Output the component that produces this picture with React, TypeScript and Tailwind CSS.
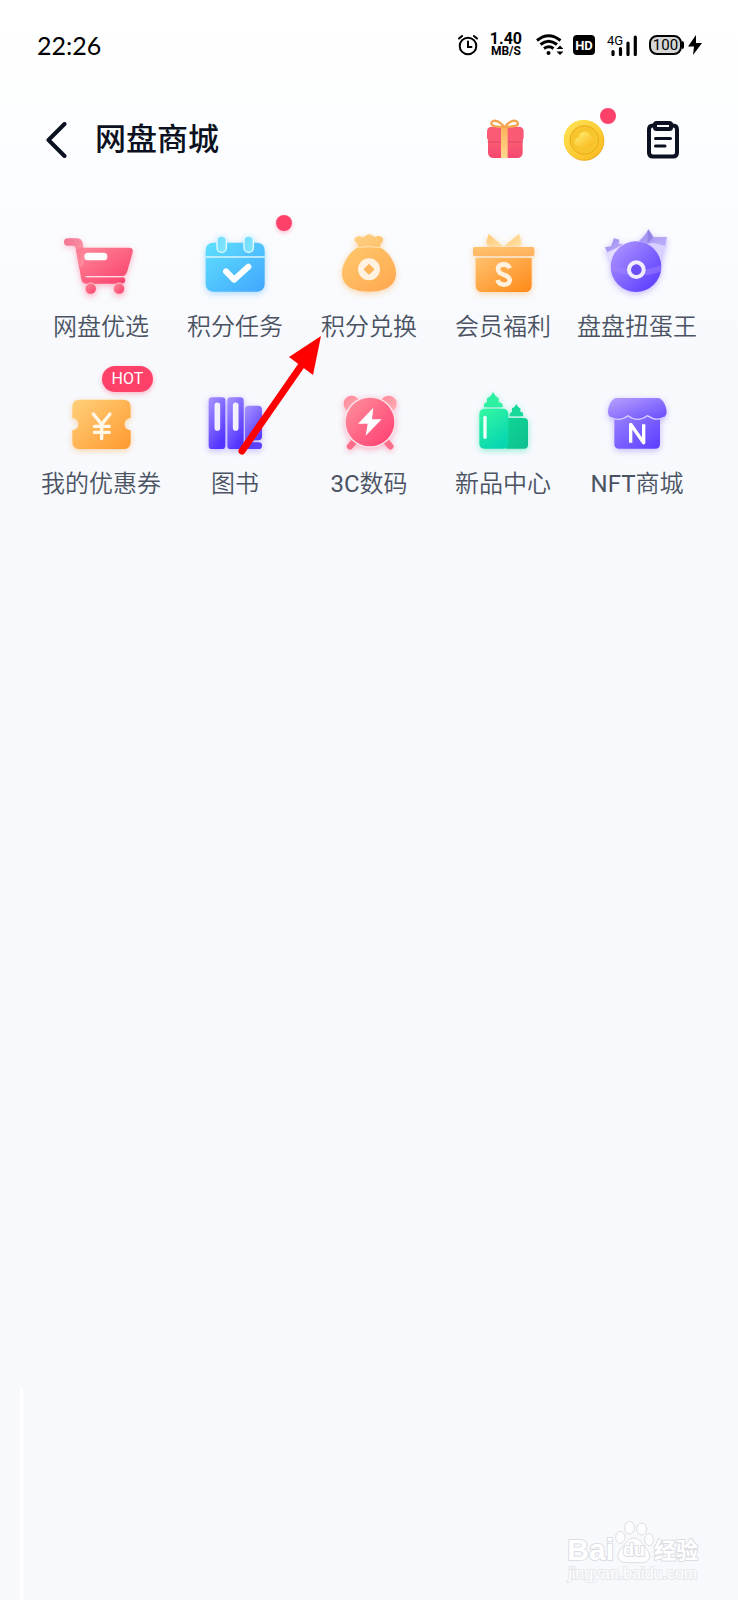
import type { ReactNode } from "react";

type IconProps = { view: string; shadow: string; children: ReactNode };

function Tile({ view, shadow, children }: IconProps) {
  return (
    <svg viewBox={view} className={`size-20 overflow-visible ${shadow}`} aria-hidden="true">
      {children}
    </svg>
  );
}

function Grad({ id, from, to, x2 = 1, y2 = 1 }: { id: string; from: string; to: string; x2?: number; y2?: number }) {
  return (
    <linearGradient id={id} x1="0" y1="0" x2={x2} y2={y2}>
      <stop offset="0" stopColor={from} />
      <stop offset="1" stopColor={to} />
    </linearGradient>
  );
}

const PINK = "drop-shadow-[0_2px_3px_rgba(255,70,110,0.4)]";
const BLUE = "drop-shadow-[0_2px_3px_rgba(60,170,255,0.4)]";
const ORANGE = "drop-shadow-[0_2px_3px_rgba(255,160,50,0.4)]";
const PURPLE = "drop-shadow-[0_2px_3px_rgba(100,70,255,0.35)]";
const GREEN = "drop-shadow-[0_2px_3px_rgba(0,220,150,0.4)]";

function CartIcon() {
  return (
    <Tile view="63 75 240 240" shadow={PINK}>
      <defs>
        <Grad id="cart" from="#ff8a98" to="#f93e6d" />
        <Grad id="cartHandle" from="#f04a72" to="#ff9aa6" />
      </defs>
      <path d="M122 143H266q15 0 12 14L261 216q-4 12-15 12H146q-6 0-4 4H246q10 0 10 9t-10 10H138q-12 0-14-13L108 150Z" fill="url(#cart)" />
      <path d="M83 115H110q15 0 18 14l2 14 4 30q-4 40-18 20L107 144q-1-7-8-7H83q-11 0-11-11t11-11Z" fill="url(#cartHandle)" opacity=".75" />
      <path d="M138 230H244" stroke="#ffdbe2" strokeWidth="4" strokeLinecap="round" />
      <rect x="133" y="158" width="69" height="23" rx="11" fill="#fff" />
      <circle cx="152" cy="266" r="17" fill="url(#cart)" stroke="#fde9ee" strokeWidth="2" />
      <circle cx="237" cy="266" r="17" fill="url(#cart)" stroke="#fde9ee" strokeWidth="2" />
    </Tile>
  );
}

function CalendarIcon() {
  return (
    <Tile view="465 75 240 240" shadow={BLUE}>
      <defs>
        <Grad id="cal" from="#5fe0fd" to="#41a6fd" />
        <Grad id="calRing" from="#72dbfb" to="#7fe6fd" />
      </defs>
      <rect x="497" y="128" width="177" height="147" rx="22" fill="url(#cal)" />
      <path d="M497 171H674" stroke="#d9f5ff" strokeWidth="5" />
      <rect x="531" y="108" width="28" height="49" rx="13" fill="url(#calRing)" stroke="#e6f9ff" strokeWidth="4" />
      <rect x="612" y="108" width="28" height="49" rx="13" fill="url(#calRing)" stroke="#e6f9ff" strokeWidth="4" />
      <path d="m558 214 24 25 43-39" fill="none" stroke="#fff" strokeWidth="18" strokeLinecap="round" strokeLinejoin="round" />
    </Tile>
  );
}

function PouchIcon() {
  return (
    <Tile view="147 75 240 240" shadow={ORANGE}>
      <defs>
        <Grad id="pouch" from="#ffc86b" to="#ffa750" />
        <Grad id="pouchTop" from="#ffd086" to="#ffc069" />
      </defs>
      <path d="M234 143q2-8-3-14c-14-8-6-23 10-20 8 5 10 2 15-2q11-9 22 0c7 6 9 3 15 1 17-1 21 13 11 21q-5 5-4 14Z" fill="url(#pouchTop)" />
      <path d="M234 143H300C325 153 348 190 348 219 348 253 322 275 267 275S186 253 186 219C186 190 209 153 234 143Z" fill="url(#pouch)" />
      <path d="M230 143q36-7 73 0" fill="none" stroke="#ffe1ae" strokeWidth="3" />
      <circle cx="267" cy="208" r="33" fill="#fff2e0" />
      <rect x="255" y="196" width="24" height="24" rx="3" fill="#ffb45a" transform="rotate(45 267 208)" />
    </Tile>
  );
}

function BenefitIcon() {
  return (
    <Tile view="69 30 240 240" shadow={ORANGE}>
      <defs>
        <Grad id="box" from="#ffc16d" to="#ff8917" />
        <Grad id="lid" from="#ffc26d" to="#ffb05b" />
        <Grad id="bow" from="#ffc873" to="#ffe3a8" />
      </defs>
      <path d="M190 94 146 57q-6 18-7 29l14 9Z" fill="url(#bow)" />
      <path d="M192 94 237 57q6 16 7 30l-14 7Z" fill="url(#bow)" />
      <path d="M107 129H275V209q0 22-20 22H127q-20 0-20-22Z" fill="url(#box)" />
      <rect x="99" y="96" width="184" height="27" rx="5" fill="url(#lid)" />
      <path d="M209 160Q205 148 191 148 174 149 174 162C174 173 183 176 191 179 201 182 209 186 209 196 208 208 199 209 191 209 180 208 175 204 173 195" fill="none" stroke="#fff1dd" strokeWidth="14" />
    </Tile>
  );
}

function CapsuleIcon() {
  return (
    <Tile view="471 30 240 240" shadow={PURPLE}>
      <defs>
        <Grad id="ball" from="#b39aff" to="#5233ff" />
        <Grad id="ribbon" from="#9a87ee" to="#c0b2fb" />
      </defs>
      <path d="M498 104 540 84 570 120 516 148Z" fill="#e3ddff" />
      <path d="M625 77 678 88 663 146 625 120Z" fill="#d8d0ff" />
      <path d="M495 97 513 94 522 70 538 74 536 86 548 88 528 100 502 112Z" fill="url(#ribbon)" />
      <path d="M597 77Q612 68 625 43L640 67 681 66 676 93 642 84 622 86Z" fill="url(#ribbon)" />
      <path d="m625 43 15 24-18 19Z" fill="#9381e4" />
      <circle cx="588" cy="155" r="76" fill="url(#ball)" />
      <path d="M514 145q74 38 149 5v20q-75 25-149-3Z" fill="#a082ff" opacity=".5" />
      <circle cx="589" cy="164" r="22" fill="#6c4ef5" stroke="#f1edff" strokeWidth="12" />
    </Tile>
  );
}

function CouponIcon() {
  return (
    <Tile view="93 66 240 240" shadow={ORANGE}>
      <defs>
        <Grad id="coupon" from="#ffd07b" to="#ff992f" />
      </defs>
      <path d="M149 119H280q22 0 22 22v33a18 18 0 0 0 0 37v34q0 22-22 22H149q-22 0-22-22V211a18 18 0 0 0 0-37V141q0-22 22-22Z" fill="url(#coupon)" />
      <path d="m190 162 25 31 25-31M215 193v43M193 199h45M193 217h45" fill="none" stroke="#fff7e8" strokeWidth="10" strokeLinecap="round" strokeLinejoin="round" />
    </Tile>
  );
}

function BooksIcon() {
  return (
    <Tile view="495 66 240 240" shadow={PURPLE}>
      <defs>
        <Grad id="book" from="#a994ff" to="#5235ff" x2={0.5} />
      </defs>
      <rect x="536" y="112" width="50" height="155" rx="10" fill="url(#book)" />
      <rect x="592" y="112" width="49" height="155" rx="10" fill="url(#book)" />
      <path d="M657 137H684q12 0 12 12V229q0 12-12 12h-8q-11 0-11 13v13H656q-11 0-11-11V148q0-11 12-11Z" fill="url(#book)" />
      <rect x="646" y="247" width="50" height="20" rx="10" fill="#5b40fa" />
      <path d="M562 136v68M617 136v68" stroke="#f2efff" strokeWidth="17" strokeLinecap="round" />
    </Tile>
  );
}

function AlarmTileIcon() {
  return (
    <Tile view="57 21 240 240" shadow={PINK}>
      <defs>
        <Grad id="alarm" from="#ff929d" to="#ff3b70" />
        <Grad id="bell" from="#ff8798" to="#ffb0b5" />
      </defs>
      <circle cx="125" cy="86" r="24" fill="url(#bell)" />
      <circle cx="236" cy="86" r="24" fill="url(#bell)" />
      <path d="m135 197-15 17M227 197l14 17" stroke="#ff6d8c" strokeWidth="19" strokeLinecap="round" />
      <circle cx="180" cy="141" r="77" fill="#fbe6ee" />
      <circle cx="180" cy="141" r="73" fill="url(#alarm)" />
      <path d="m190 98-46 48h29l-6 36 48-49h-29Z" fill="#fff" />
    </Tile>
  );
}

function BottlesIcon() {
  return (
    <Tile view="459 21 240 240" shadow={GREEN}>
      <defs>
        <Grad id="bottle" from="#36f9a2" to="#08d7b0" x2={0.5} />
        <Grad id="bottleBack" from="#0fd795" to="#0fbf8f" />
      </defs>
      <path d="M619 86q6 13 12 14v10q11 1 8 14H599q-1-11 7-13v-11q10-4 13-14Z" fill="#19d89c" />
      <rect x="580" y="129" width="74" height="92" rx="12" fill="url(#bottleBack)" />
      <path d="M549 51q7 14 17 19v11q14 3 12 16H522q-2-13 9-16V70q12-5 18-19Z" fill="#2df0a3" />
      <rect x="508" y="101" width="87" height="120" rx="15" fill="url(#bottle)" />
      <path d="M525 127v60" stroke="#edfff9" strokeWidth="10" strokeLinecap="round" />
    </Tile>
  );
}

function ShopIcon() {
  return (
    <Tile view="111 21 240 240" shadow={PURPLE}>
      <defs>
        <Grad id="shop" from="#9b83ff" to="#5b3cff" />
        <Grad id="awning" from="#b7a2ff" to="#6848fb" />
      </defs>
      <path d="M163 116H300V206q0 15-15 15H178q-15 0-15-15Z" fill="url(#shop)" />
      <path d="M170 69H293c16 0 26 25 27 41 0 22-30 31-58 12q-30 24-58 0c-28 21-60 10-60-12 1-16 10-41 26-41Z" fill="url(#awning)" />
      <path d="M151 127q28 14 53-5 28 22 58 0 27 18 50 5" fill="none" stroke="#d6ccff" strokeWidth="4" />
      <path d="M212 203V148L251 203V148" fill="none" stroke="#fff" strokeWidth="10" strokeLinejoin="round" />
    </Tile>
  );
}

type Item = { latin?: string; label: string; icon: ReactNode; dot?: boolean; tag?: string };

const items: Item[] = [
  { label: "网盘优选", icon: <CartIcon /> },
  { label: "积分任务", icon: <CalendarIcon />, dot: true },
  { label: "积分兑换", icon: <PouchIcon /> },
  { label: "会员福利", icon: <BenefitIcon /> },
  { label: "盘盘扭蛋王", icon: <CapsuleIcon /> },
  { label: "我的优惠券", icon: <CouponIcon />, tag: "HOT" },
  { label: "图书", icon: <BooksIcon /> },
  { latin: "3C", label: "数码", icon: <AlarmTileIcon /> },
  { label: "新品中心", icon: <BottlesIcon /> },
  { latin: "NFT", label: "商城", icon: <ShopIcon /> },
];

function StatusBar() {
  return (
    <div className="flex h-[90px] items-center justify-between pr-9 pl-[37px] text-black">
      <time className="font-['Lato'] text-[25px] leading-[30px]">22:26</time>
      <div className="flex items-center">
        <svg viewBox="0 0 20 22" className="h-[22px] w-5" fill="none" stroke="#000" strokeWidth="2" strokeLinecap="round" aria-hidden="true">
          <circle cx="10" cy="12" r="8.3" />
          <path d="M1 4.5 4 2M16 2l3 2.500M10 7.500V13h3.500" />
        </svg>
        <div className="ml-3 flex flex-col items-center font-['Roboto'] font-bold">
          <span className="text-[16px] leading-[13px]">1.40</span>
          <span className="text-[12px] leading-[13px]">MB/S</span>
        </div>
        <svg viewBox="0 0 27 22" className="ml-[14px] h-[22px] w-[27px]" fill="none" stroke="#000" strokeWidth="3" aria-hidden="true">
          <path d="M1 6.500Q12.500-3 24.500 6.500M4.500 10.500q8-6.500 16.500 0M8 14.500q5-3.500 9.500 0" />
          <circle cx="12.500" cy="19" r="2" fill="#000" stroke="none" />
          <path d="m20.500 15 3.500-3.500 3.500 3.500ZM20.500 17.500 24 21l3.500-3.500Z" fill="#000" stroke="none" />
        </svg>
        <span className="ml-[10px] flex h-5 w-[22px] items-center justify-center rounded-[4px] bg-black font-['Roboto'] text-[13px] leading-none font-bold text-white">
          HD
        </span>
        <div className="ml-3 flex items-end">
          <span className="-mr-3 mb-[9px] w-4 font-['Roboto'] text-[13px] leading-[12px]">4G</span>
          <svg viewBox="0 0 26 21" className="h-[21px] w-[26px]" aria-hidden="true">
            <path d="M2 19.500v-3M9.500 19.500v-6M17 19.500V8M24.300 19.500V2" stroke="#000" strokeWidth="3.200" strokeLinecap="round" />
          </svg>
        </div>
        <div className="ml-3 flex items-center">
          <span className="flex h-5 w-[33px] items-center justify-center rounded-[8px] border-2 border-black bg-[#d6d6d6] font-['Roboto'] text-[15px] leading-none">
            100
          </span>
          <span className="h-2 w-[2px] rounded-r bg-black" />
          <svg viewBox="0 0 14 22" className="ml-1 h-[22px] w-[14px]" aria-hidden="true">
            <path d="M8 1 0 12.500h6L5 21l9-12H8Z" fill="#000" />
          </svg>
        </div>
      </div>
    </div>
  );
}

function Header() {
  return (
    <header className="flex h-[99px] items-center pr-[53px] pl-[45px]">
      <button type="button" aria-label="返回" className="flex">
        <svg viewBox="0 0 24 36" className="h-9 w-6" fill="none" stroke="#0b1120" strokeWidth="4" strokeLinecap="round" strokeLinejoin="round" aria-hidden="true">
          <path d="M19.500 2 3.500 18l16 16" />
        </svg>
      </button>
      <h1 className="ml-[26px] text-[31px] leading-10 font-medium text-[#0b1120]">网盘商城</h1>
      <div className="ml-auto flex items-center gap-[35px]">
        <button type="button" aria-label="礼物" className="flex w-11 justify-center">
          <svg viewBox="78 63 120 144" className="h-12 w-10" aria-hidden="true">
            <defs>
              <Grad id="gift" from="#ff6a77" to="#f5476f" x2={0} />
              <Grad id="band" from="#fbb35b" to="#ffd98d" x2={0} />
            </defs>
            <rect x="87" y="102" width="104" height="87" rx="16" fill="url(#gift)" />
            <rect x="84" y="95" width="110" height="46" rx="14" fill="#fb5a75" />
            <path d="M86 141H192" stroke="#cf3f62" strokeWidth="2" />
            <path d="M126 97h20v92H126Z" fill="url(#band)" />
            <path d="M136 97C120 74 98 72 97 86q0 9 39 10 42-1 41-10C175 72 153 74 136 97Z" fill="none" stroke="#f5a552" strokeWidth="7" strokeLinejoin="round" />
          </svg>
        </button>
        <button type="button" aria-label="积分" className="relative flex w-11 justify-center">
          <svg viewBox="307 63 132 144" className="h-12 w-11" aria-hidden="true">
            <defs>
              <Grad id="coin" from="#ffe557" to="#f9b91d" />
              <Grad id="cloud" from="#fff07a" to="#fbb818" />
            </defs>
            <circle cx="374" cy="137" r="60" fill="#efad22" />
            <circle cx="372" cy="134" r="60" fill="url(#coin)" />
            <circle cx="374" cy="135" r="43" fill="#f7c52e" stroke="#eda91c" strokeWidth="3" />
            <path d="M355 153q-11-2-10-13 2-11 12-12 3-18 18-18 15 1 18 15 12 4 11 15-2 12-14 13Z" fill="url(#cloud)" />
          </svg>
          <span className="absolute -top-2 -right-[10px] size-4 rounded-full bg-[#fd4168]" />
        </button>
        <button type="button" aria-label="订单" className="flex w-11 justify-center">
          <svg viewBox="0 0 34 38" className="h-[38px] w-[34px]" fill="none" stroke="#0b1120" strokeWidth="4" strokeLinecap="round" strokeLinejoin="round" aria-hidden="true">
            <path d="M8.500 4.500H7q-4 0-4 4V31.500q0 4 4 4H27q4 0 4-4V8.500q0-4-4-4H25.500" />
            <rect x="9" y="2" width="16" height="6" rx="1.500" />
            <path d="M9.500 17.500H24.500M9.500 25H19" strokeWidth="3" />
          </svg>
        </button>
      </div>
    </header>
  );
}

function Arrow() {
  return (
    <svg viewBox="0 0 84 120" className="pointer-events-none absolute top-[335px] left-[238px] h-[120px] w-[84px]" aria-hidden="true">
      <path d="M4 116 63 31" stroke="#fe0000" strokeWidth="7" strokeLinecap="round" />
      <path d="M83 1 51 22 75 40Z" fill="#fe0000" />
    </svg>
  );
}

function Watermark() {
  return (
    <div className="pointer-events-none absolute right-10 bottom-4 flex flex-col items-center text-white">
      <div className="flex h-[44px] items-end">
        <span className="font-['Liberation_Sans'] text-[30px] leading-[28px] font-bold [paint-order:stroke] [-webkit-text-stroke:2px_#dcdee4]">Bai</span>
        <div className="relative">
          <svg viewBox="210 58 120 132" className="h-11 w-10" fill="#fdfdff" stroke="#dcdee4" strokeWidth="3" aria-hidden="true">
            <ellipse cx="257" cy="81" rx="15" ry="19" />
            <ellipse cx="293" cy="85" rx="15" ry="18" />
            <ellipse cx="229" cy="110" rx="14" ry="18" />
            <ellipse cx="315" cy="117" rx="13" ry="18" />
            <path d="M270 112c18 0 26 20 38 33 17 19 9 41-14 41H246c-23 0-33-22-16-41 13-13 22-33 40-33Z" />
          </svg>
          <span className="absolute bottom-1 left-[9px] font-['Liberation_Sans'] text-[18px] leading-[20px] font-bold [paint-order:stroke] [-webkit-text-stroke:2px_#dcdee4]">du</span>
        </div>
        <span className="text-[22px] leading-[26px] font-bold [paint-order:stroke] [-webkit-text-stroke:2px_#dcdee4]">经验</span>
      </div>
      <span className="font-['Liberation_Sans'] text-[16px] leading-[20px] [paint-order:stroke] [-webkit-text-stroke:2px_#e6e8ed]">jingyan.baidu.com</span>
    </div>
  );
}

export default function App() {
  return (
    <main className="relative min-h-screen overflow-hidden bg-[#f7f9fd] bg-[linear-gradient(#ffffff_0px,#fdfeff_120px,#f7f9fd_360px)] font-[Roboto,'Noto_Sans_CJK_SC',sans-serif]">
      <StatusBar />
      <Header />
      <nav className="grid grid-cols-5 gap-y-[39px] px-[34px] pt-9">
        {items.map((item) => (
          <a key={item.label} href="#" className="relative flex flex-col items-center gap-[6px]">
            {item.icon}
            <span className="text-[24px] leading-8 font-[350] whitespace-nowrap text-[#4b5363]">
              {item.latin && <span className="font-normal">{item.latin}</span>}
              {item.label}
            </span>
            {item.dot && (
              <span className="absolute -top-[10px] left-1/2 ml-[41px] size-4 rounded-full bg-[#fd4168] shadow-[0_2px_4px_rgba(253,65,104,0.3)]" />
            )}
            {item.tag && (
              <span className="absolute -top-4 left-1/2 ml-px flex h-[26px] w-[51px] items-center justify-center rounded-full bg-[#fd4168] text-[16px] leading-none text-white shadow-[0_2px_5px_rgba(253,65,104,0.35)]">
                {item.tag}
              </span>
            )}
          </a>
        ))}
      </nav>
      <Arrow />
      <div className="absolute bottom-0 left-5 h-[212px] w-[3px] bg-white" />
      <Watermark />
    </main>
  );
}
